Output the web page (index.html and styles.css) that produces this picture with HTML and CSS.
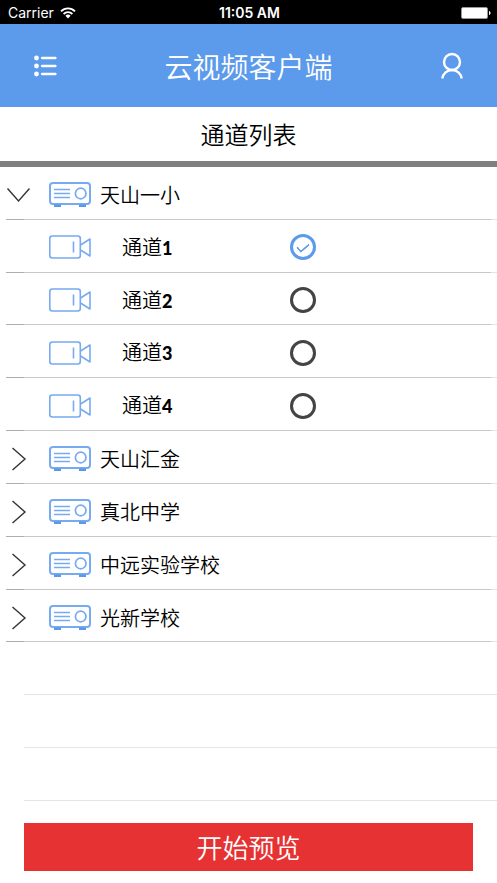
FILE: index.html
```html
<!DOCTYPE html>
<html lang="zh-CN">
<head>
<meta charset="utf-8">
<meta name="viewport" content="width=device-width, initial-scale=1">
<title>云视频客户端</title>
<link rel="stylesheet" href="styles.css">
</head>
<body>
<svg class="symbols" aria-hidden="true">
  <symbol id="device" viewBox="0 0 42 26">
    <rect x="1" y="1" width="40" height="21" rx="3" fill="none" stroke="#77aaf0" stroke-width="2"/>
    <path d="M5 22.500h7V25H5zM30 22.500h7V25h-7z" fill="#5a99ea"/>
    <path d="M5 7.500h16M5 11.500h16M5 15.500h16" stroke="#77aaf0" stroke-width="1.4"/>
    <circle cx="31.700" cy="11.500" r="5.300" fill="none" stroke="#77aaf0" stroke-width="1.7"/>
  </symbol>
  <symbol id="camera" viewBox="0 0 42 24">
    <g fill="none" stroke="#77aaf0" stroke-width="1.6" stroke-linejoin="round">
      <rect x=".8" y="1" width="30.500" height="22" rx="2.500"/>
      <path d="M24.500 6.500v11M31.500 10 41 4v17l-9.500-6"/>
    </g>
  </symbol>
  <symbol id="right" viewBox="0 0 24 24">
    <path d="M6.500 1 19 12 6.500 23" fill="none" stroke="#333" stroke-width="1.4"/>
  </symbol>
  <symbol id="down" viewBox="0 0 24 24">
    <path d="M1.500 5.500 12.500 18 23.500 5.500" fill="none" stroke="#333" stroke-width="1.4"/>
  </symbol>
</svg>
<div class="status">
  <span class="carrier">Carrier
    <svg width="16" height="12" viewBox="0 0 16 12" aria-hidden="true">
      <g fill="none" stroke="#fff" stroke-width="1.8"><path d="M1 4.300a10 10 0 0 1 14 0M3.600 7a6.300 6.300 0 0 1 8.800 0"/></g>
      <path d="M8 11.500 5.400 8.800a3.800 3.800 0 0 1 5.200 0z" fill="#fff"/>
    </svg>
  </span>
  <span class="time">11:05 AM</span>
  <svg class="battery" width="30" height="12" viewBox="0 0 30 12" aria-hidden="true">
    <rect x=".5" y=".5" width="26" height="11" rx="1.500" fill="#fff" stroke="#999"/>
    <path d="M28 4c2 .5 2 3.500 0 4z" fill="#fff"/>
  </svg>
</div>
<header class="header">
  <button class="icon-button" type="button" aria-label="菜单">
    <svg width="24" height="24" viewBox="0 0 24 24" fill="#fff">
      <circle cx="3.500" cy="4" r="2.400"/><circle cx="3.500" cy="12" r="2.400"/><circle cx="3.500" cy="20" r="2.400"/>
      <path d="M9 4H22.500M9 12H22.500M9 20H22.500" stroke="#fff" stroke-width="2.300" stroke-linecap="round"/>
    </svg>
  </button>
  <h1>云视频客户端</h1>
  <button class="icon-button" type="button" aria-label="用户">
    <svg width="24" height="28" viewBox="0 0 24 28" fill="none" stroke="#fff" stroke-width="2.400">
      <circle cx="12" cy="10" r="8"/>
      <path d="M2.300 26.500c.8-5 4.700-8.500 9.700-8.500s8.900 3.500 9.700 8.500"/>
    </svg>
  </button>
</header>
<main>
  <h2>通道列表</h2>
  <ul class="list">
    <li class="row"><button class="group" type="button" aria-expanded="true"><svg class="arrow"><use href="#down"/></svg><svg class="device"><use href="#device"/></svg>天山一小</button></li>
    <li class="row"><label class="channel"><svg class="camera"><use href="#camera"/></svg><span>通道<b>1</b></span><input type="radio" name="channel" checked></label></li>
    <li class="row"><label class="channel"><svg class="camera"><use href="#camera"/></svg><span>通道<b>2</b></span><input type="radio" name="channel"></label></li>
    <li class="row"><label class="channel"><svg class="camera"><use href="#camera"/></svg><span>通道<b>3</b></span><input type="radio" name="channel"></label></li>
    <li class="row"><label class="channel"><svg class="camera"><use href="#camera"/></svg><span>通道<b>4</b></span><input type="radio" name="channel"></label></li>
    <li class="row"><button class="group" type="button" aria-expanded="false"><svg class="arrow"><use href="#right"/></svg><svg class="device"><use href="#device"/></svg>天山汇金</button></li>
    <li class="row"><button class="group" type="button" aria-expanded="false"><svg class="arrow"><use href="#right"/></svg><svg class="device"><use href="#device"/></svg>真北中学</button></li>
    <li class="row"><button class="group" type="button" aria-expanded="false"><svg class="arrow"><use href="#right"/></svg><svg class="device"><use href="#device"/></svg>中远实验学校</button></li>
    <li class="row"><button class="group" type="button" aria-expanded="false"><svg class="arrow"><use href="#right"/></svg><svg class="device"><use href="#device"/></svg>光新学校</button></li>
    <li class="blank" aria-hidden="true"></li>
    <li class="blank" aria-hidden="true"></li>
    <li class="blank" aria-hidden="true"></li>
  </ul>
</main>
<footer><button class="preview" type="button">开始预览</button></footer>
</body>
</html>
```

FILE: styles.css
```css
* { box-sizing: border-box; }

body {
  margin: 0;
  min-height: 100vh;
  display: flex;
  flex-direction: column;
  background: #fff;
  color: #000;
  font-family: "Noto Sans CJK SC", sans-serif;
  font-weight: 350;
}

button {
  padding: 0;
  border: 0;
  background: none;
  color: inherit;
  font: inherit;
  cursor: pointer;
}

h1, h2 { margin: 0; font-weight: 350; }

.symbols { position: absolute; width: 0; height: 0; }

.status {
  display: grid;
  grid-template-columns: 1fr auto 1fr;
  align-items: center;
  height: 24px;
  padding: 2px 6px 0 8px;
  background: #000;
  color: #fff;
  font: 14px/20px Inter, sans-serif;
}

.carrier { display: flex; align-items: center; gap: 6px; }
.time { font-weight: 600; }
.battery { justify-self: end; }

.header {
  display: flex;
  align-items: center;
  justify-content: space-between;
  height: 83px;
  padding: 0 33px;
  background: #5c9aeb;
  color: #fff;
}

.header h1 { font-size: 28px; line-height: 40px; }
.icon-button { display: flex; }

main { flex: 1; display: flex; flex-direction: column; }

h2 {
  padding: 9px 0;
  border-bottom: 6px solid #808080;
  font-size: 24px;
  line-height: 36px;
  text-align: center;
}

.list {
  flex: 1;
  display: grid;
  grid-auto-rows: minmax(48px, 1fr);
  margin: 0;
  padding: 0;
  list-style: none;
}

.row {
  display: grid;
  background:
    linear-gradient(#adadad, #adadad) 6px 100% / 18px 1px no-repeat,
    linear-gradient(#c8c8c8, #c8c8c8) 6px 100% / calc(100% - 12px) 1px no-repeat,
    linear-gradient(#e5e5e5, #e5e5e5) 24px 100% / 100% 1px no-repeat;
}

.blank { margin-left: 24px; border-bottom: 1px solid #e5e5e5; }

.group, .channel {
  display: flex;
  align-items: center;
  padding-top: 3px;
  font-size: 20px;
  line-height: 28px;
  text-align: left;
}

.arrow { width: 24px; height: 24px; margin: 0 19px 0 6px; }
.device { width: 42px; height: 26px; margin-right: 9px; }

.channel {
  display: grid;
  grid-template-columns: 73px 168px 1fr;
  padding-top: 2px;
  padding-left: 49px;
}

.camera { width: 42px; height: 24px; }
.channel b { font: 900 18px/28px Lato, sans-serif; }

.channel input {
  appearance: none;
  display: grid;
  place-items: center;
  width: 26px;
  height: 26px;
  margin: 0;
  border: 3px solid #444;
  border-radius: 50%;
}

.channel input:checked { border-color: #5c9aeb; }

.channel input:checked::after {
  content: "";
  width: 10px;
  height: 5px;
  margin-bottom: 2px;
  border: solid #5c9aeb;
  border-width: 0 0 2px 2px;
  border-radius: 1px;
  transform: rotate(-40deg);
}

footer { padding: 22px 24px 12px; }

.preview {
  display: block;
  width: 100%;
  height: 48px;
  background: #e63232;
  color: #fff;
  font-size: 26px;
  line-height: 48px;
}
```
